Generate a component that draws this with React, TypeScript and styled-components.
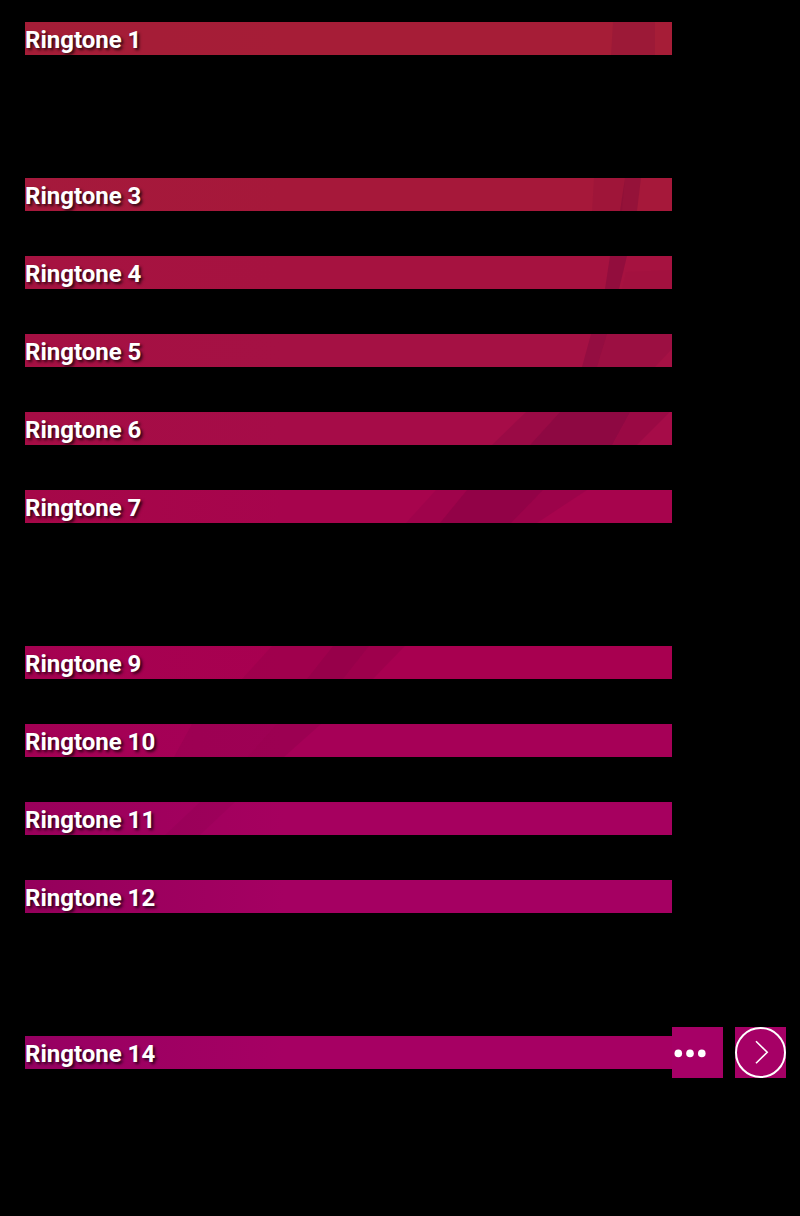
import React from "react";
import styled, { createGlobalStyle } from "styled-components";

const GlobalStyle = createGlobalStyle`
  *, *::before, *::after { box-sizing: border-box; }
  body {
    margin: 0;
    background: #000;
    color: #fff;
    font-family: Roboto, "Liberation Sans", sans-serif;
  }
`;

interface Streak {
  points: string;
  opacity: number;
}

interface Ringtone {
  name: string;
  from: string;
  to: string;
  streaks: Streak[];
  actions?: boolean;
}

/* null leaves an empty slot in the list */
const ringtones: (Ringtone | null)[] = [
  {
    name: "Ringtone 1",
    from: "#a41d37",
    to: "#a61d37",
    streaks: [{ points: "588,0 630,0 630,33 586,33", opacity: 0.12 }],
  },
  null,
  {
    name: "Ringtone 3",
    from: "#a5193c",
    to: "#a6183a",
    streaks: [
      { points: "569,0 600,0 597,33 567,33", opacity: 0.09 },
      { points: "600,0 616,0 612,33 595,33", opacity: 0.22 },
    ],
  },
  {
    name: "Ringtone 4",
    from: "#a61341",
    to: "#a61240",
    streaks: [
      { points: "585,0 602,0 594,33 580,33", opacity: 0.27 },
      { points: "601,16 647,14 647,33 597,33", opacity: 0.04 },
    ],
  },
  {
    name: "Ringtone 5",
    from: "#a51043",
    to: "#a51144",
    streaks: [
      { points: "566,0 582,0 572,33 557,33", opacity: 0.22 },
      { points: "582,0 647,0 647,15 630,33 572,33", opacity: 0.11 },
    ],
  },
  {
    name: "Ringtone 6",
    from: "#a50d45",
    to: "#a60c48",
    streaks: [
      { points: "501,0 535,0 505,33 467,33", opacity: 0.16 },
      { points: "535,0 605,0 587,33 505,33", opacity: 0.32 },
      { points: "605,0 645,0 612,33 587,33", opacity: 0.17 },
    ],
  },
  {
    name: "Ringtone 7",
    from: "#a50848",
    to: "#a7044d",
    streaks: [
      { points: "411,0 442,0 415,33 381,33", opacity: 0.1 },
      { points: "442,0 518,0 486,33 415,33", opacity: 0.28 },
      { points: "518,0 562,0 512,33 486,33", opacity: 0.14 },
    ],
  },
  null,
  {
    name: "Ringtone 9",
    from: "#a50251",
    to: "#a80050",
    streaks: [
      { points: "247,0 308,0 282,33 217,33", opacity: 0.09 },
      { points: "308,0 344,0 318,33 282,33", opacity: 0.22 },
      { points: "344,0 380,0 348,33 318,33", opacity: 0.13 },
    ],
  },
  {
    name: "Ringtone 10",
    from: "#a30054",
    to: "#a60057",
    streaks: [
      { points: "167,0 252,0 223,33 149,33", opacity: 0.1 },
      { points: "252,0 296,0 259,33 223,33", opacity: 0.13 },
    ],
  },
  {
    name: "Ringtone 11",
    from: "#99005b",
    to: "#a6005f",
    streaks: [{ points: "175,0 210,0 175,33 140,33", opacity: 0.08 }],
  },
  {
    name: "Ringtone 12",
    from: "#94005b",
    to: "#a50062",
    streaks: [],
  },
  null,
  {
    name: "Ringtone 14",
    from: "#960062",
    to: "#a60063",
    streaks: [],
    actions: true,
  },
];

const List = styled.ul`
  list-style: none;
  min-height: 100vh;
  margin: 0;
  padding: 0 14px 0 25px;
`;

const Row = styled.li`
  display: flex;
  align-items: center;
  height: 78px;
  padding: 13px 0 14px;
`;

const Bar = styled.div<{ $from: string; $to: string }>`
  position: relative;
  flex: 1;
  height: 33px;
  background: linear-gradient(90deg, ${(p) => p.$from}, ${(p) => p.$to} 40%);
`;

const Art = styled.svg`
  position: absolute;
  inset: 0;
  width: 100%;
  height: 100%;
  fill: #5c0038;
`;

const Name = styled.span`
  position: relative;
  display: block;
  font-size: 24px;
  font-weight: 700;
  line-height: 37px;
  white-space: nowrap;
  text-shadow: 2px 2px 3px rgba(0, 0, 0, 0.75);
`;

const Actions = styled.div`
  display: flex;
  flex: none;
  gap: 12px;
  width: 114px;
`;

const IconButton = styled.button`
  width: 51px;
  height: 51px;
  padding: 0;
  border: 0;
  background: #a60066;
  color: #fff;
  cursor: pointer;

  svg { display: block; }
`;

function MoreIcon() {
  return (
    <svg width="51" height="51" viewBox="0 0 51 51" fill="currentColor" aria-hidden="true">
      <circle cx="6.3" cy="26.4" r="3.8" />
      <circle cx="18" cy="26.4" r="3.8" />
      <circle cx="29.8" cy="26.4" r="3.8" />
    </svg>
  );
}

function NextIcon() {
  return (
    <svg width="51" height="51" viewBox="0 0 51 51" fill="none" stroke="currentColor" aria-hidden="true">
      <circle cx="25.5" cy="25.5" r="24.5" strokeWidth="2" />
      <path d="M21 14.3 L32.2 25.3 L21 36.3" strokeWidth="1.6" />
    </svg>
  );
}

function RingtoneRow({ tone }: { tone: Ringtone }) {
  return (
    <Row>
      <Bar $from={tone.from} $to={tone.to}>
        <Art viewBox="0 0 647 33" preserveAspectRatio="none" aria-hidden="true">
          {tone.streaks.map((s) => (
            <polygon key={s.points} points={s.points} fillOpacity={s.opacity} />
          ))}
        </Art>
        <Name>{tone.name}</Name>
      </Bar>
      <Actions>
        {tone.actions && (
          <>
            <IconButton type="button" aria-label="More options">
              <MoreIcon />
            </IconButton>
            <IconButton type="button" aria-label="Next page">
              <NextIcon />
            </IconButton>
          </>
        )}
      </Actions>
    </Row>
  );
}

export default function App() {
  return (
    <>
      <GlobalStyle />
      <List>
        {ringtones.map((tone, i) =>
          tone ? <RingtoneRow key={tone.name} tone={tone} /> : <Row key={i} aria-hidden="true" />
        )}
      </List>
    </>
  );
}
